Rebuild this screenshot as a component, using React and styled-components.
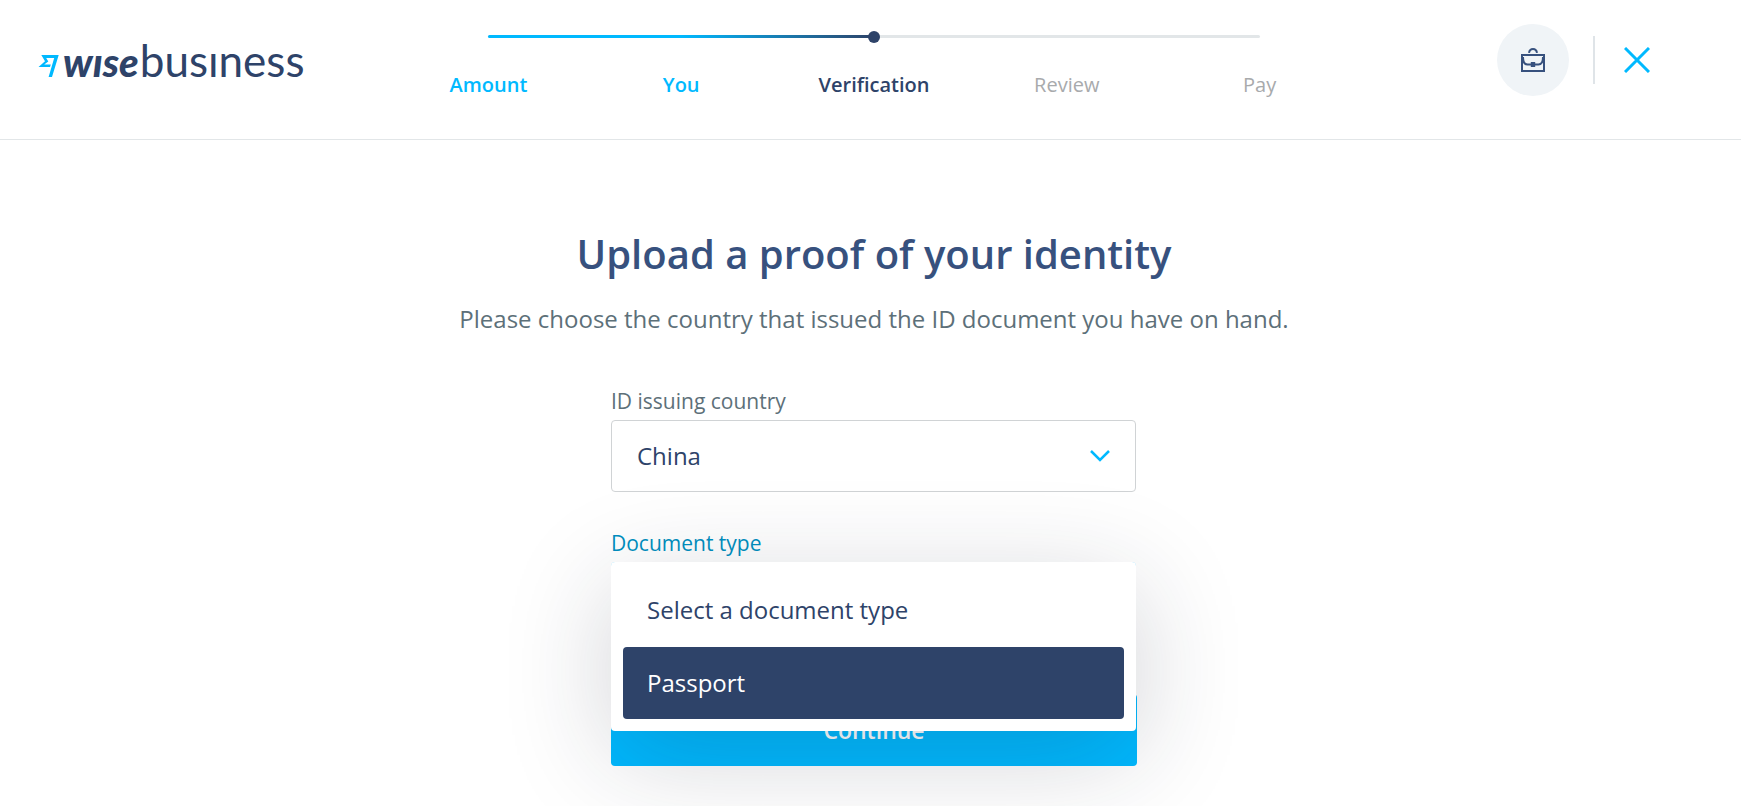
import React, { useState } from 'react';
import styled, { createGlobalStyle, css } from 'styled-components';

const color = {
  cyan: '#00b9ff',
  navy: '#2e4369',
  heading: '#37517e',
  body: '#5d7079',
  muted: '#a8aaac',
  line: '#e2e6e8',
  focus: '#008fc0',
};

const GlobalStyle = createGlobalStyle`
  *, *::before, *::after { box-sizing: border-box; }
  body {
    margin: 0;
    background: #fff;
    color: ${color.body};
    font-family: 'Open Sans', 'Noto Sans', sans-serif;
    font-size: 24px;
    line-height: 36px;
  }
  button, select { font: inherit; }
`;

const Header = styled.header`
  display: grid;
  grid-template-columns: minmax(0, 1fr) minmax(0, 964px) minmax(0, 1fr);
  align-items: start;
  min-height: 140px;
  padding: 0 31px 0 38px;
  border-bottom: 1px solid ${color.line};
`;

const Logo = styled.a`
  display: flex;
  align-items: baseline;
  height: 60px;
  padding-top: 36px;
  color: ${color.navy};
  font-family: Lato, sans-serif;
  line-height: 48px;
  text-decoration: none;
`;

const Flag = styled.svg`
  width: 21px;
  height: 22px;
  margin-right: 4px;
  flex: none;
`;

const LogoName = styled.span`
  font-size: 40px;
  font-style: italic;
  font-weight: 900;
`;

const LogoProduct = styled.span`
  margin-left: 1px;
  font-size: 44px;
  font-weight: 400;
`;

const Stepper = styled.nav`
  padding-top: 35px;
`;

const Track = styled.div`
  display: flex;
  height: 3px;
  margin: 0 10%;
  border-radius: 2px;
  background: ${color.line};
`;

const TrackFill = styled.div`
  display: flex;
  align-items: center;
  justify-content: flex-end;
  border-radius: 2px;
  background: linear-gradient(90deg, ${color.cyan} 50%, ${color.navy});
`;

const TrackDot = styled.span`
  flex: none;
  width: 12px;
  height: 12px;
  margin-right: -6px;
  border-radius: 50%;
  background: ${color.navy};
`;

const Steps = styled.ol`
  display: grid;
  grid-template-columns: repeat(5, 1fr);
  margin: 32px 0 0;
  padding: 0;
  list-style: none;
`;

const Step = styled.li`
  color: ${color.muted};
  font-size: 20px;
  line-height: 30px;
  text-align: center;

  ${(p) => p.$state === 'done' && css`
    color: ${color.cyan};
    font-weight: 600;
  `}
  ${(p) => p.$state === 'current' && css`
    color: ${color.navy};
    font-weight: 600;
  `}
`;

const StepLink = styled.a`
  color: inherit;
  text-decoration: none;
`;

const Actions = styled.div`
  display: flex;
  align-items: center;
  justify-content: flex-end;
  gap: 24px;
  padding: 24px 55px 0 0;
`;

const AccountButton = styled.button`
  display: grid;
  place-items: center;
  width: 72px;
  height: 72px;
  padding: 0;
  border: 0;
  border-radius: 50%;
  background: #f0f4f7;
  cursor: pointer;
`;

const Divider = styled.span`
  width: 2px;
  height: 48px;
  background: #dfe4e8;
`;

const CloseButton = styled.button`
  display: grid;
  place-items: center;
  width: 36px;
  height: 36px;
  padding: 0;
  border: 0;
  background: none;
  cursor: pointer;
`;

const Main = styled.main`
  display: flex;
  flex-direction: column;
  align-items: center;
  padding: 87px 31px 40px 38px;
`;

const Title = styled.h1`
  margin: 0;
  color: ${color.heading};
  font-size: 40px;
  font-weight: 600;
  line-height: 54px;
  text-align: center;
`;

const Lead = styled.p`
  margin: 20px 0 0;
  text-align: center;
`;

const Form = styled.form`
  display: flex;
  flex-direction: column;
  width: 100%;
  max-width: 526px;
  margin-top: 49px;
`;

const Field = styled.div`
  position: relative;
  margin: 0 1px 36px 0;
`;

const Label = styled.label`
  display: block;
  padding-bottom: 4px;
  color: ${(p) => (p.$active ? color.focus : color.body)};
  font-size: 21px;
  line-height: 30px;
`;

const SelectBox = styled.div`
  display: grid;
  align-items: center;

  > * { grid-area: 1 / 1; }
  > svg {
    justify-self: end;
    margin-right: 26px;
    pointer-events: none;
  }
`;

const controlStyle = css`
  width: 100%;
  height: 72px;
  padding: 0 60px 0 25px;
  border: 1px solid #d0d3d5;
  border-radius: 4px;
  background: #fff;
  color: ${color.navy};
  text-align: left;
`;

const Select = styled.select`
  ${controlStyle}
  appearance: none;
`;

const Trigger = styled.button`
  ${controlStyle}
  display: block;
  border-color: ${color.cyan};
`;

const Menu = styled.ul`
  position: absolute;
  z-index: 1;
  top: 34px;
  left: 0;
  right: 0;
  display: grid;
  gap: 1px;
  margin: 0;
  padding: 12px;
  border-radius: 4px;
  background: #fff;
  box-shadow: 0 24px 108px rgba(30, 36, 54, 0.2);
  list-style: none;
`;

const Option = styled.li`
  padding: 18px 24px;
  border-radius: 4px;
  background: ${(p) => (p.$active ? color.navy : 'transparent')};
  color: ${(p) => (p.$active ? '#fff' : color.navy)};
  cursor: pointer;
`;

const Submit = styled.button`
  height: 72px;
  margin-top: 24px;
  padding: 0;
  border: 0;
  border-radius: 4px;
  background: ${color.cyan};
  color: #fff;
  font-size: 23px;
  font-weight: 600;
  cursor: pointer;
`;

const steps = [
  { name: 'Amount', state: 'done' },
  { name: 'You', state: 'done' },
  { name: 'Verification', state: 'current' },
  { name: 'Review', state: 'next' },
  { name: 'Pay', state: 'next' },
];

const documentTypes = ['Select a document type', 'Passport'];

function BriefcaseIcon() {
  return (
    <svg width="24" height="24" viewBox="0 0 24 24" fill="none" stroke={color.heading} strokeWidth="2" aria-hidden="true">
      <path d="M8 4.8C8.4 2.4 9.800 1 12 1s3.600 1.400 4 3.800" />
      <path d="M1 7h22v16H1z" />
      <path d="M2 9c0 5 1 7.500 4.500 7.500h11c3.500 0 4.500-2.500 4.500-7.500" />
      <path d="M9.800 14h4.400v5H9.800z" fill={color.heading} stroke="none" />
    </svg>
  );
}

function CloseIcon() {
  return (
    <svg width="26" height="26" viewBox="0 0 26 26" fill="none" stroke={color.cyan} strokeWidth="3" aria-hidden="true">
      <path d="M1 1l24 24M25 1L1 25" />
    </svg>
  );
}

function ChevronIcon() {
  return (
    <svg width="20" height="12" viewBox="0 0 20 12" fill="none" stroke={color.cyan} strokeWidth="2.5" aria-hidden="true">
      <path d="M1 1l9 9 9-9" />
    </svg>
  );
}

export default function App() {
  const [active, setActive] = useState(1);

  return (
    <>
      <GlobalStyle />
      <Header>
        <Logo href="#home">
          <Flag viewBox="0 0 21 22" aria-hidden="true">
            <path
              fill={color.cyan}
              d="M3.3 0H20.7L14 22H10.6L16.2 3H8.2L10.3 6.5L6.2 9.5H12.8L12 12H0.5L7 6.3Z"
            />
          </Flag>
          <LogoName>wıse</LogoName>
          <LogoProduct>busıness</LogoProduct>
        </Logo>
        <Stepper aria-label="Progress">
          <Track>
            <TrackFill style={{ width: '50%' }}>
              <TrackDot />
            </TrackFill>
          </Track>
          <Steps>
            {steps.map(({ name, state }) => (
              <Step key={name} $state={state} aria-current={state === 'current' ? 'step' : undefined}>
                {state === 'done' ? <StepLink href={`#${name.toLowerCase()}`}>{name}</StepLink> : name}
              </Step>
            ))}
          </Steps>
        </Stepper>
        <Actions>
          <AccountButton type="button" aria-label="Business account">
            <BriefcaseIcon />
          </AccountButton>
          <Divider />
          <CloseButton type="button" aria-label="Close">
            <CloseIcon />
          </CloseButton>
        </Actions>
      </Header>
      <Main>
        <Title>Upload a proof of your identity</Title>
        <Lead>Please choose the country that issued the ID document you have on hand.</Lead>
        <Form onSubmit={(e) => e.preventDefault()}>
          <Field>
            <Label htmlFor="country">ID issuing country</Label>
            <SelectBox>
              <Select id="country" defaultValue="China">
                <option>China</option>
              </Select>
              <ChevronIcon />
            </SelectBox>
          </Field>
          <Field>
            <Label htmlFor="document-type" $active>Document type</Label>
            <Trigger
              id="document-type"
              type="button"
              aria-haspopup="listbox"
              aria-expanded="true"
              aria-controls="document-types"
            />
            <Menu id="document-types" role="listbox">
              {documentTypes.map((name, i) => (
                <Option
                  key={name}
                  role="option"
                  aria-selected={i === active}
                  $active={i === active}
                  onMouseEnter={() => setActive(i)}
                >
                  {name}
                </Option>
              ))}
            </Menu>
          </Field>
          <Submit type="submit">Continue</Submit>
        </Form>
      </Main>
    </>
  );
}
